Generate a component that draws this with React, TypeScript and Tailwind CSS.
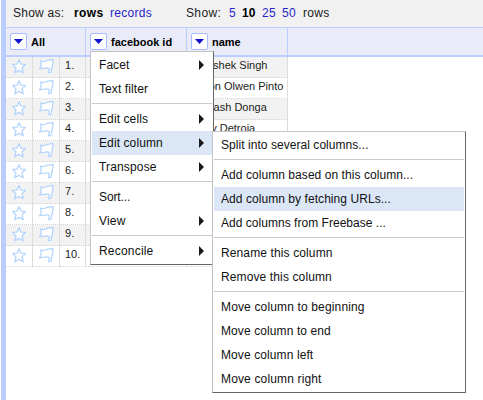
type Entry = { label: string; arrow?: boolean; active?: boolean; spacing?: string };

const columnMenu: Entry[][] = [
  [{ label: 'Facet', arrow: true, spacing: 'tracking-[0.05px]' }, { label: 'Text filter', spacing: 'tracking-[0.1px]' }],
  [
    { label: 'Edit cells', arrow: true, spacing: 'tracking-[0.1px]' },
    { label: 'Edit column', arrow: true, active: true, spacing: 'tracking-[0.1px]' },
    { label: 'Transpose', arrow: true, spacing: 'tracking-[0.15px]' },
  ],
  [{ label: 'Sort...', spacing: 'tracking-[-0.1px]' }, { label: 'View', arrow: true }],
  [{ label: 'Reconcile', arrow: true }],
];

const editMenu: Entry[][] = [
  [{ label: 'Split into several columns...', spacing: 'tracking-[0.05px]' }],
  [
    { label: 'Add column based on this column...', spacing: 'tracking-[0.06px]' },
    { label: 'Add column by fetching URLs...', active: true, spacing: 'tracking-[0.06px]' },
    { label: 'Add columns from Freebase ...', spacing: 'tracking-[0.03px]' },
  ],
  [
    { label: 'Rename this column', spacing: 'tracking-[0.12px]' },
    { label: 'Remove this column', spacing: 'tracking-[0.12px]' },
  ],
  [
    { label: 'Move column to beginning', spacing: 'tracking-[0.15px]' },
    { label: 'Move column to end', spacing: 'tracking-[0.1px]' },
    { label: 'Move column left', spacing: 'tracking-[0.1px]' },
    { label: 'Move column right', spacing: 'tracking-[0.15px]' },
  ],
];

const names = ['Abhishek Singh', 'Alison Olwen Pinto', 'Prakash Donga', 'Uday Detroja', '', '', '', '', '', ''];

function Menu({ groups, className }: { groups: Entry[][]; className: string }) {
  return (
    <div
      className={`absolute border border-t-[#c4c4c4] border-r-[#666] border-b-[#666] border-l-[#c4c4c4] bg-white p-px text-[12px] text-[#111] ${className}`}
    >
      {groups.map((group, i) => (
        <div key={i}>
          {i > 0 && <div className="mt-0.5 mb-[3px] h-px bg-[#c8c8c8]" />}
          {group.map((item) => (
            <div
              key={item.label}
              className={`flex h-6 items-center justify-between pr-2 pl-[7px] whitespace-nowrap ${item.active ? 'bg-[#dbe7f7]' : ''}`}
            >
              <span className={item.spacing ?? 'tracking-[0.2px]'}>{item.label}</span>
              {item.arrow && (
                <svg width="5" height="10" viewBox="0 0 5 10" className="fill-[#1a1a1a]">
                  <path d="M0 0 5 5 0 10Z" />
                </svg>
              )}
            </div>
          ))}
        </div>
      ))}
    </div>
  );
}

function MenuButton() {
  return (
    <span className="flex h-[17px] w-[17px] shrink-0 items-center justify-center rounded-[2px] border border-[#a9bcff] bg-white">
      <svg width="9" height="5" viewBox="0 0 9 5" className="fill-[#1111cc]">
        <path d="M0 0H9L4.5 5Z" />
      </svg>
    </span>
  );
}

function HeaderCell({ label, className }: { label: string; className: string }) {
  return (
    <div className={`flex items-center gap-1 border-r border-[#bbccff] pl-1 ${className}`}>
      <MenuButton />
      <span className="pt-px whitespace-nowrap">{label}</span>
    </div>
  );
}

function Star() {
  return (
    <svg width="16" height="16" viewBox="0 0 16 16" className="fill-white stroke-[#b5d5fc]" strokeWidth="1.3" strokeLinejoin="round">
      <path d="M8 1.7 6.1 6.1 1.6 6.4 5 10 3.7 14.8 8 12.4 12.3 14.8 11 10 14.4 6.4 9.9 6.1Z" />
    </svg>
  );
}

function Flag() {
  return (
    <svg width="16" height="16" viewBox="0 0 16 16" className="fill-white stroke-[#b5d5fc]" strokeWidth="1.3" strokeLinejoin="round">
      <path d="M2.6 3.2C5 3.9 7.5 3.4 9.5 2.3 11 1.6 13 2 14.9 1.5L15 4 13 14.2 11 15 10.7 14 11.3 10.6C9.4 8.6 7.4 10.6 5 10.4 3.6 10.2 2.8 10.4 1.4 11 2.6 9.6 3.2 8.6 3.2 6.8Z" />
    </svg>
  );
}

export default function App() {
  return (
    <div className="relative h-[400px] w-[483px] overflow-hidden bg-white pl-px font-['Liberation_Sans',Arial,sans-serif] text-[#222]">
      <div className="h-full border-l-[5px] border-[#bbccff]">
        <div className="flex h-[27px] items-center bg-[#f1f1f1] pb-0.5 pl-[7px] text-[12px] whitespace-nowrap text-[#222]">
          <span className="w-[61px] tracking-[0.25px]">Show as:</span>
          <b className="w-9 tracking-[0.4px] text-black">rows</b>
          <span className="w-[76px] tracking-[0.3px] text-[#2a1fcc]">records</span>
          <span className="w-[43px] tracking-[0.35px]">Show:</span>
          <span className="w-[13px] text-[#2a1fcc]">5</span>
          <b className="w-5 text-black">10</b>
          <span className="w-5 tracking-[0.3px] text-[#2a1fcc]">25</span>
          <span className="w-[21px] tracking-[0.3px] text-[#2a1fcc]">50</span>
          <span className="tracking-[0.3px]">rows</span>
        </div>
        <div className="flex h-[30px] border-t border-b-2 border-[#bbccff] bg-[#e9ecf8] text-[11px] font-bold text-black">
          <HeaderCell label="All" className="w-20" />
          <HeaderCell label="facebook id" className="w-[101px]" />
          <HeaderCell label="name" className="w-[101px]" />
        </div>
        {names.map((name, i) => (
          <div
            key={i}
            className={`flex h-[21px] w-[282px] text-[11px] *:border-r *:border-b *:border-r-[#ddd] *:border-b-[#d4d4d4] *:[border-bottom-style:dotted] ${i % 2 ? 'bg-white' : 'bg-[#f2f2f2]'}`}
          >
            <div className="flex w-[27px] items-start pt-px pl-[5px]"><Star /></div>
            <div className="flex w-[27px] items-start pt-px pl-[5px]"><Flag /></div>
            <div className="w-[26px] pl-[5px] leading-4">{i + 1}.</div>
            <div className="w-[101px]" />
            <div className="w-[101px] pr-[5px] pl-1 leading-4 whitespace-nowrap">{name}</div>
          </div>
        ))}
      </div>
      <Menu groups={columnMenu} className="top-[51px] left-[90px] w-[124px]" />
      <Menu groups={editMenu} className="top-[131px] left-[212px] w-[254px]" />
    </div>
  );
}
